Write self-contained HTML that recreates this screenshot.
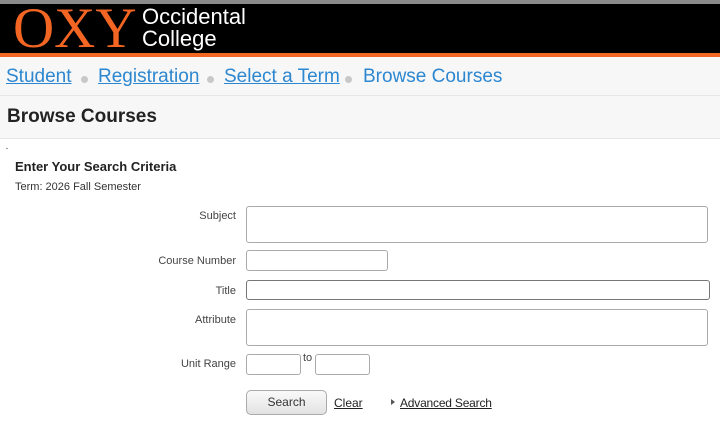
<!DOCTYPE html>
<html><head><style>
body{margin:0;width:720px;height:424px;overflow:hidden;background:#fff;font-family:"Liberation Sans",Arial,sans-serif;position:relative}
.a{position:absolute}
.top{left:0;top:0;width:720px;height:4px;background:#8a8a8a}
.hdr{left:0;top:4px;width:720px;height:49px;background:#000}
.org{left:0;top:53px;width:720px;height:4px;background:#f26522}
.oxy{left:13px;top:0px;font-family:"Liberation Serif",serif;font-size:57px;color:#f26522;line-height:57px}
.occ{left:142px;top:6px;color:#fff;font-size:22px;line-height:22px;font-family:"Liberation Sans",sans-serif}
.bc{left:0;top:57px;width:720px;height:38px;background:#f7f7f7;border-bottom:1px solid #e6e6e6}
.bc span{position:absolute;top:9px;font-size:19px;color:#2d87d0}
.bc u{text-decoration:underline}
.dot{position:absolute;top:76px;width:7px;height:7px;border-radius:50%;background:#c8c8c8}
.pt{left:0;top:96px;width:720px;height:42px;background:#f7f7f7;border-bottom:1px solid #e6e6e6}
.pt span{position:absolute;left:7px;top:10px;font-size:19px;font-weight:bold;color:#222}
.lbl{font-size:11px;color:#444;text-align:right;width:236px;left:0}
.in{border:1px solid #aaa;border-radius:3px;background:#fff;box-sizing:border-box}
</style></head><body>
<div class="a top"></div><div class="a hdr"></div><div class="a org"></div>
<div class="a oxy">OXY</div>
<div class="a occ">Occidental<br>College</div>
<div class="a bc">
<span style="left:6px"><u>Student</u></span>
<span style="left:98px"><u>Registration</u></span>
<span style="left:224px"><u>Select a Term</u></span>
<span style="left:363px">Browse Courses</span>
</div>
<div class="dot" style="left:81px"></div>
<div class="dot" style="left:207px"></div>
<div class="dot" style="left:345px"></div>
<div class="a pt"><span>Browse Courses</span></div>
<div class="a" style="left:6px;top:148px;width:2px;height:1px;background:#999"></div>
<div class="a" style="left:15px;top:159px;font-size:13px;font-weight:bold;color:#222">Enter Your Search Criteria</div>
<div class="a" style="left:15px;top:181px;font-size:11px;color:#333">Term: 2026 Fall Semester</div>
<div class="a lbl" style="top:210px">Subject</div>
<div class="a in" style="left:246px;top:206px;width:462px;height:37px"></div>
<div class="a lbl" style="top:255px">Course Number</div>
<div class="a in" style="left:246px;top:250px;width:142px;height:21px"></div>
<div class="a lbl" style="top:285px">Title</div>
<div class="a in" style="left:246px;top:280px;width:464px;height:20px;border-color:#777"></div>
<div class="a lbl" style="top:314px">Attribute</div>
<div class="a in" style="left:246px;top:309px;width:462px;height:37px"></div>
<div class="a lbl" style="top:358px">Unit Range</div>
<div class="a in" style="left:246px;top:354px;width:55px;height:21px"></div>
<div class="a" style="left:303px;top:352px;font-size:11px;color:#444">to</div>
<div class="a in" style="left:315px;top:354px;width:55px;height:21px"></div>
<div class="a" style="left:246px;top:390px;width:81px;height:25px;box-sizing:border-box;border:1px solid #aaa;border-radius:5px;background:linear-gradient(#fafafa,#e2e2e2);font-size:12px;color:#333;text-align:center;line-height:23px">Search</div>
<div class="a" style="left:334px;top:396px;font-size:12px;color:#222;text-decoration:underline">Clear</div>
<div class="a" style="left:391px;top:399px;width:0;height:0;border-left:4px solid #555;border-top:3px solid transparent;border-bottom:3px solid transparent"></div>
<div class="a" style="left:400px;top:396px;font-size:12px;color:#222;text-decoration:underline;letter-spacing:-0.2px">Advanced Search</div>
</body></html>
